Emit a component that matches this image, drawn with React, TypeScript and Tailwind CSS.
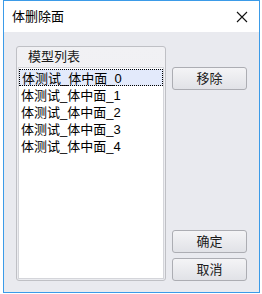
import React, { useState } from "react";

const ITEMS = ["体测试_体中面_0", "体测试_体中面_1", "体测试_体中面_2", "体测试_体中面_3", "体测试_体中面_4"];

const font = "font-['Liberation_Sans','Noto_Sans_CJK_SC',sans-serif]";

function DlgButton({ label }: { label: string }) {
  return (
    <button
      className={`h-[23px] w-[75px] rounded-[3px] border border-[#acadb3] bg-gradient-to-b from-[#f4f4f6] to-[#e1e2e7] text-[13px] leading-none text-[#1a1a1a] ${font}`}
    >
      {label}
    </button>
  );
}

export default function App() {
  const [selected, setSelected] = useState(0);

  return (
    <div className="h-[294px] w-[262px] bg-white">
      <div className="ml-[3px] flex h-[293px] w-[257px] flex-col border border-[#3b9be8] bg-[#e9eaef]">
        {/* Title bar */}
        <div className="flex h-[31px] items-center justify-between bg-white pl-[8px] pr-[10px]">
          <span className={`text-[13px] text-black ${font}`}>体删除面</span>
          <svg width="12" height="12" viewBox="0 0 12 12" className="mr-[1px]">
            <path d="M1 1 L11 11 M11 1 L1 11" stroke="#111" strokeWidth="1.1" fill="none" />
          </svg>
        </div>

        {/* Body */}
        <div className="flex flex-1 pl-[12px] pr-[11px] pt-[14px] pb-[11px]">
          {/* Group list */}
          <div className="flex w-[150px] flex-col rounded-[3px] border border-[#bfc0c5] bg-gradient-to-b from-[#f1f1f4] to-[#ebecf0]">
            <div className={`flex h-[20px] items-center pl-[11px] text-[13px] text-[#1a1a1a] ${font}`}>
              模型列表
            </div>
            <div className="mx-[1px] mb-[1px] flex-1 border border-[#d4d5da] bg-white pt-[1px]">
              {ITEMS.map((item, i) => (
                <div
                  key={item}
                  onClick={() => setSelected(i)}
                  className={`flex h-[17px] items-center pl-[2px] text-[13px] leading-[15px] text-black ${font} ${
                    selected === i ? "border border-dotted border-black bg-[#e3eafb] pl-[1px]" : ""
                  }`}
                >
                  <span className="pt-[1px]">{item}</span>
                </div>
              ))}
            </div>
          </div>

          {/* Buttons */}
          <div className="ml-[6px] flex flex-col pt-[21px]">
            <DlgButton label="移除" />
            <div className="flex-1" />
            <div className="flex flex-col gap-[5px]">
              <DlgButton label="确定" />
              <DlgButton label="取消" />
            </div>
          </div>
        </div>
      </div>
    </div>
  );
}
